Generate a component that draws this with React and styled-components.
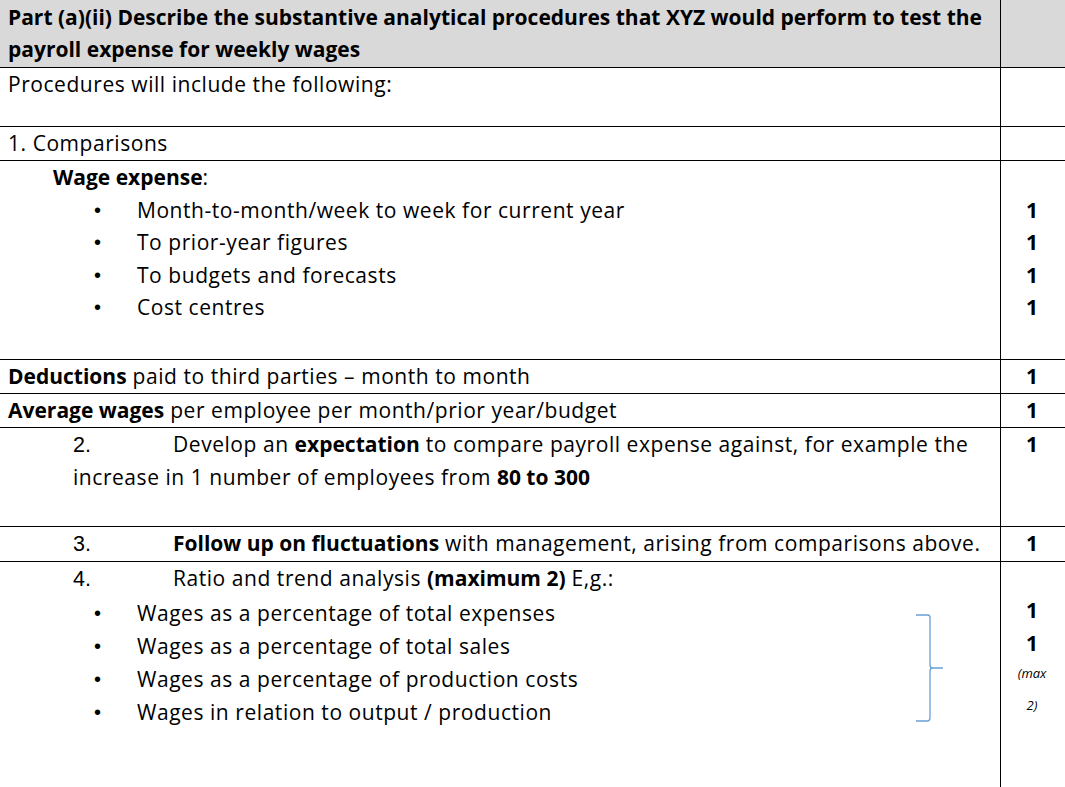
import React from "react";
import styled, { createGlobalStyle } from "styled-components";

const Global = createGlobalStyle`
  html, body { margin: 0; padding: 0; background: #fff; }
  body { font-family: "Open Sans", Lato, sans-serif; color: #000; overflow: hidden; }
  b { letter-spacing: 0; }
`;

const Table = styled.div`
  width: 1065px;
  font-family: "Open Sans", Lato, sans-serif;
  font-size: 21px;
  color: #000;
`;

const Row = styled.div`
  display: grid;
  grid-template-columns: 1001px 1fr;
  box-sizing: border-box;
  height: ${(p) => p.$h}px;
  border-bottom: ${(p) => (p.$last ? "none" : "1px solid #000")};
  background: ${(p) => (p.$shade ? "#d9d9d9" : "#fff")};
`;

const Main = styled.div`
  position: relative;
  box-sizing: border-box;
  border-right: 1px solid #000;
  padding: ${(p) => p.$pt ?? 0}px 0 0 ${(p) => p.$pl ?? 8}px;
  line-height: ${(p) => p.$lh ?? 32}px;
  font-weight: ${(p) => (p.$bold ? 700 : 400)};
  letter-spacing: ${(p) => (p.$bold ? 0 : 0.55)}px;
  white-space: nowrap;
`;

const Mark = styled.div`
  box-sizing: border-box;
  padding-top: ${(p) => p.$pt ?? 0}px;
  text-align: center;
  padding-right: 2px;
  font-weight: 700;
  line-height: ${(p) => p.$lh ?? 32}px;
`;

const MarkLine = styled.div`
  height: ${(p) => p.$h ?? 32.5}px;
  line-height: ${(p) => p.$h ?? 32.5}px;
`;

const MaxNote = styled.div`
  font-size: 13px;
  font-style: italic;
  font-weight: 400;
  height: ${(p) => p.$h}px;
  line-height: ${(p) => p.$h}px;
`;

const SubHead = styled.div`
  padding-left: 53px;
  font-weight: 700;
  letter-spacing: 0;
  & > span { font-weight: 400; }
`;

const List = styled.ul`
  list-style: none;
  margin: ${(p) => p.$mt ?? 0}px 0 0 0;
  padding: 0;
`;

const Item = styled.li`
  display: flex;
  height: ${(p) => p.$h ?? 32.5}px;
  line-height: ${(p) => p.$h ?? 32.5}px;
`;

const Bullet = styled.span`
  flex: none;
  box-sizing: border-box;
  width: 137px;
  padding-left: 94px;
  font-family: "Liberation Sans", Arial, sans-serif;
  font-size: 20px;
  letter-spacing: 0;
`;

const NumPara = styled.div`
  padding-left: 73px;
`;

const Num = styled.span`
  display: inline-block;
  width: 100px;
  font-family: "Liberation Sans", Arial, sans-serif;
  font-size: 21.5px;
  letter-spacing: 0;
`;

const Brace = styled.svg`
  position: absolute;
  left: 908px;
  top: 51px;
  width: 40px;
  height: 112px;
`;

export default function App() {
  return (
    <>
      <Global />
      <Table>
        <Row $h={68} $shade>
          <Main $bold $pt={1}>
            Part (a)(ii) Describe the substantive analytical procedures that XYZ would perform to test the
            <br />
            payroll expense for weekly wages
          </Main>
          <Mark />
        </Row>
        <Row $h={59}>
          <Main>Procedures will include the following:</Main>
          <Mark />
        </Row>
        <Row $h={34}>
          <Main>1. Comparisons</Main>
          <Mark />
        </Row>
        <Row $h={199}>
          <Main $pl={0} $lh={32.5}>
            <SubHead>
              Wage expense<span>:</span>
            </SubHead>
            <List>
              <Item><Bullet>•</Bullet>Month-to-month/week to week for current year</Item>
              <Item><Bullet>•</Bullet>To prior-year figures</Item>
              <Item><Bullet>•</Bullet>To budgets and forecasts</Item>
              <Item><Bullet>•</Bullet>Cost centres</Item>
            </List>
          </Main>
          <Mark>
            <MarkLine />
            <MarkLine>1</MarkLine>
            <MarkLine>1</MarkLine>
            <MarkLine>1</MarkLine>
            <MarkLine>1</MarkLine>
          </Mark>
        </Row>
        <Row $h={34}>
          <Main>
            <b>Deductions</b> paid to third parties – month to month
          </Main>
          <Mark>1</Mark>
        </Row>
        <Row $h={34}>
          <Main>
            <b>Average wages</b> per employee per month/prior year/budget
          </Main>
          <Mark>1</Mark>
        </Row>
        <Row $h={99}>
          <Main $pl={73}>
            <Num>2.</Num>Develop an <b>expectation</b> to compare payroll expense against, for example the
            <br />
            increase in 1 number of employees from <b>80 to 300</b>
          </Main>
          <Mark>1</Mark>
        </Row>
        <Row $h={35}>
          <Main $pl={73}>
            <Num>3.</Num>
            <b>Follow up on fluctuations</b> with management, arising from comparisons above.
          </Main>
          <Mark>1</Mark>
        </Row>
        <Row $h={226} $last>
          <Main $pl={0}>
            <NumPara>
              <Num>4.</Num>Ratio and trend analysis <b>(maximum 2)</b> E,g.:
            </NumPara>
            <List $mt={2}>
              <Item $h={33}><Bullet>•</Bullet>Wages as a percentage of total expenses</Item>
              <Item $h={33}><Bullet>•</Bullet>Wages as a percentage of total sales</Item>
              <Item $h={33}><Bullet>•</Bullet>Wages as a percentage of production costs</Item>
              <Item $h={33}><Bullet>•</Bullet>Wages in relation to output / production</Item>
            </List>
            <Brace viewBox="0 0 40 112" fill="none">
              <path
                d="M8 2 H20 Q22 2 22 5 V52 Q22 55 25 55 H35 H25 Q22 55 22 58 V105 Q22 108 19 108 H8"
                stroke="#6a9fd8"
                strokeWidth="1.3"
              />
            </Brace>
          </Main>
          <Mark $pt={32}>
            <MarkLine $h={33}>1</MarkLine>
            <MarkLine $h={33}>1</MarkLine>
            <MaxNote $h={26}>(max</MaxNote>
            <MaxNote $h={38}>2)</MaxNote>
          </Mark>
        </Row>
      </Table>
    </>
  );
}
